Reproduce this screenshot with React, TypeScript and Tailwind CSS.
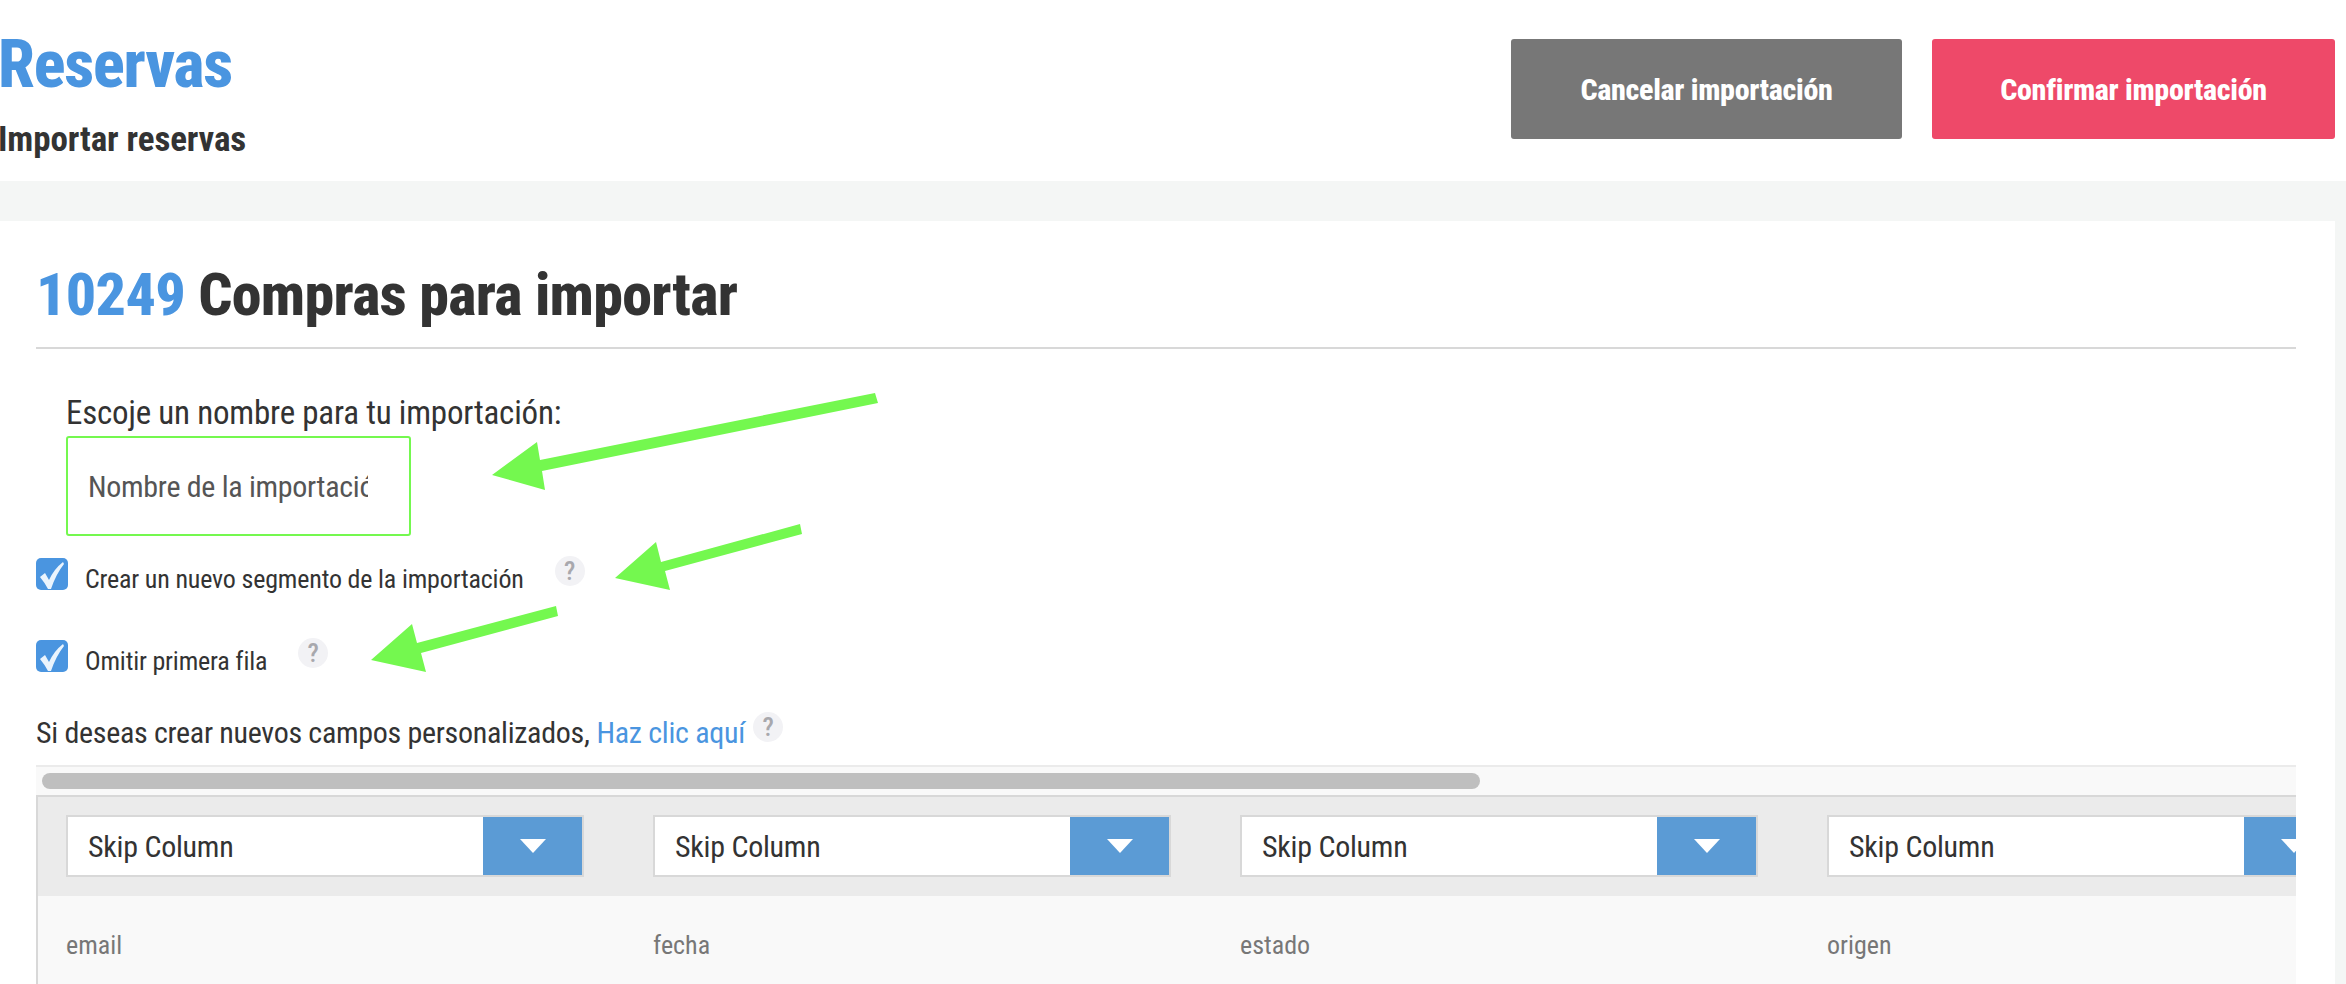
const columns = ["email", "fecha", "estado", "origen"];

const Arrow = ({ points }: { points: string }) => (
  <polygon points={points} fill="#74f84f" />
);

const Help = ({ className = "" }: { className?: string }) => (
  <span
    className={`flex h-[30px] w-[30px] shrink-0 items-center justify-center rounded-full bg-[#f2f2f5] text-[26px] font-medium text-[#a8a8ad] ${className}`}
  >
    ?
  </span>
);

const CheckRow = ({ label, className = "" }: { label: string; className?: string }) => (
  <div className={`flex items-start ${className}`}>
    <span className="flex h-8 w-8 shrink-0 items-center justify-center rounded-[5px] bg-[#4a95e0]">
      <svg width="32" height="32" viewBox="0 0 32 32">
        <path d="M4 19 L9 15 L13 22 Q18 11 27 4 L28 6 Q20 16 15 31 L12 31 Q9 25 4 19 Z" fill="#eaf4fd" />
      </svg>
    </span>
    <span className="ml-[17px] mt-[6px] text-[26px] leading-[30px] tracking-[-0.18px] text-[#333]">{label}</span>
  </div>
);

const SkipSelect = () => (
  <div className="flex h-[62px] w-[518px] border-2 border-[#d8d8d8] bg-white">
    <span className="flex-1 pl-5 text-[30px] leading-[60px] tracking-[-0.25px] text-[#333]">Skip Column</span>
    <span className="flex h-[58px] w-[99px] items-center justify-center bg-[#5b9bd5]">
      <svg width="26" height="14" viewBox="0 0 26 14">
        <path d="M0 0 H26 L13 14 Z" fill="#fff" />
      </svg>
    </span>
  </div>
);

export default function App() {
  return (
    <div className="relative h-[984px] w-[2346px] overflow-hidden bg-[#f4f6f5] font-['Roboto',sans-serif] [font-stretch:75%]">
      <header className="flex h-[181px] justify-between bg-white pr-[11px]">
        <div className="-ml-[2px]">
          <h1 className="mt-[27px] text-[66px] font-extrabold leading-[76px] tracking-[-1.2px] text-[#4a95e0]">Reservas</h1>
          <h2 className="mt-[17px] text-[35px] font-bold leading-[40px] tracking-[-0.1px] text-[#333]">Importar reservas</h2>
        </div>
        <div className="mt-[39px] flex gap-[30px]">
          <button className="h-[100px] w-[391px] rounded-[3px] bg-[#777] text-[30px] font-extrabold tracking-[-0.3px] text-white">
            Cancelar importación
          </button>
          <button className="h-[100px] w-[403px] rounded-[3px] bg-[#ee4969] text-[30px] font-extrabold tracking-[-0.3px] text-white">
            Confirmar importación
          </button>
        </div>
      </header>

      <main className="mr-[11px] mt-10 h-[763px] bg-white pl-9 pr-[39px]">
        <div className="h-[128px] border-b-2 border-[#d8d8d8] pt-[39px] text-[60px] font-extrabold leading-[70px] tracking-[-0.7px] text-[#333]">
          <span className="text-[#4a95e0]">10249</span> Compras para importar
        </div>

        <div className="ml-[30px] mt-[45px] text-[33px] leading-[38px] tracking-[-0.2px] text-[#333]">
          Escoje un nombre para tu importación:
        </div>
        <input
          placeholder="Nombre de la importación"
          className="ml-[30px] mt-[4px] block h-[100px] w-[345px] rounded-[3px] border-2 border-[#74f84f] pl-5 pr-[41px] text-[30px] tracking-[-0.3px] outline-none placeholder:text-[#555]"
        />

        <div className="flex items-start">
          <CheckRow label="Crear un nuevo segmento de la importación" className="mt-[22px]" />
          <Help className="ml-[31px] mt-[20px]" />
        </div>
        <div className="flex items-start">
          <CheckRow label="Omitir primera fila" className="mt-[46px]" />
          <Help className="ml-[31px] mt-[44px]" />
        </div>

        <div className="mt-[36px] flex h-[42px] items-start text-[30px] leading-[42px] tracking-[-0.3px] text-[#333]">
          <span>Si deseas crear nuevos campos personalizados,</span>
          <a className="ml-[7px] text-[#4a95e0]">Haz clic aquí</a>
          <Help className="ml-2" />
        </div>

        <div className="mt-[11px] h-[30px] border-t-2 border-[#ebebeb] bg-[#f9f9f9] pl-[6px] pt-[6px]">
          <div className="h-4 w-[1438px] rounded-full bg-[#bfbfbf]" />
        </div>

        <div className="overflow-hidden border-l-2 border-t-2 border-[#d8d8d8]">
          <div className="grid h-[99px] grid-cols-[repeat(4,587px)] bg-[#ebebeb] pl-7 pt-[18px]">
            {columns.map((c) => (
              <SkipSelect key={c} />
            ))}
          </div>
          <div className="grid h-[100px] grid-cols-[repeat(4,587px)] bg-[#f9f9f9] pl-7 pt-[32px] text-[26px] leading-[34px] text-[#777]">
            {columns.map((c) => (
              <span key={c}>{c}</span>
            ))}
          </div>
        </div>
      </main>

      {/* green annotation arrows drawn over the page */}
      <svg className="pointer-events-none absolute left-0 top-0" width="2346" height="984">
        <Arrow points="875,393 878,403 542,471 545,490 492,475 537,442 540,460" />
        <Arrow points="800,524 802,534 665,571 670,590 615,578 656,542 661,562" />
        <Arrow points="556,606 558,616 421,653 426,672 371,660 412,624 417,643" />
      </svg>
    </div>
  );
}
